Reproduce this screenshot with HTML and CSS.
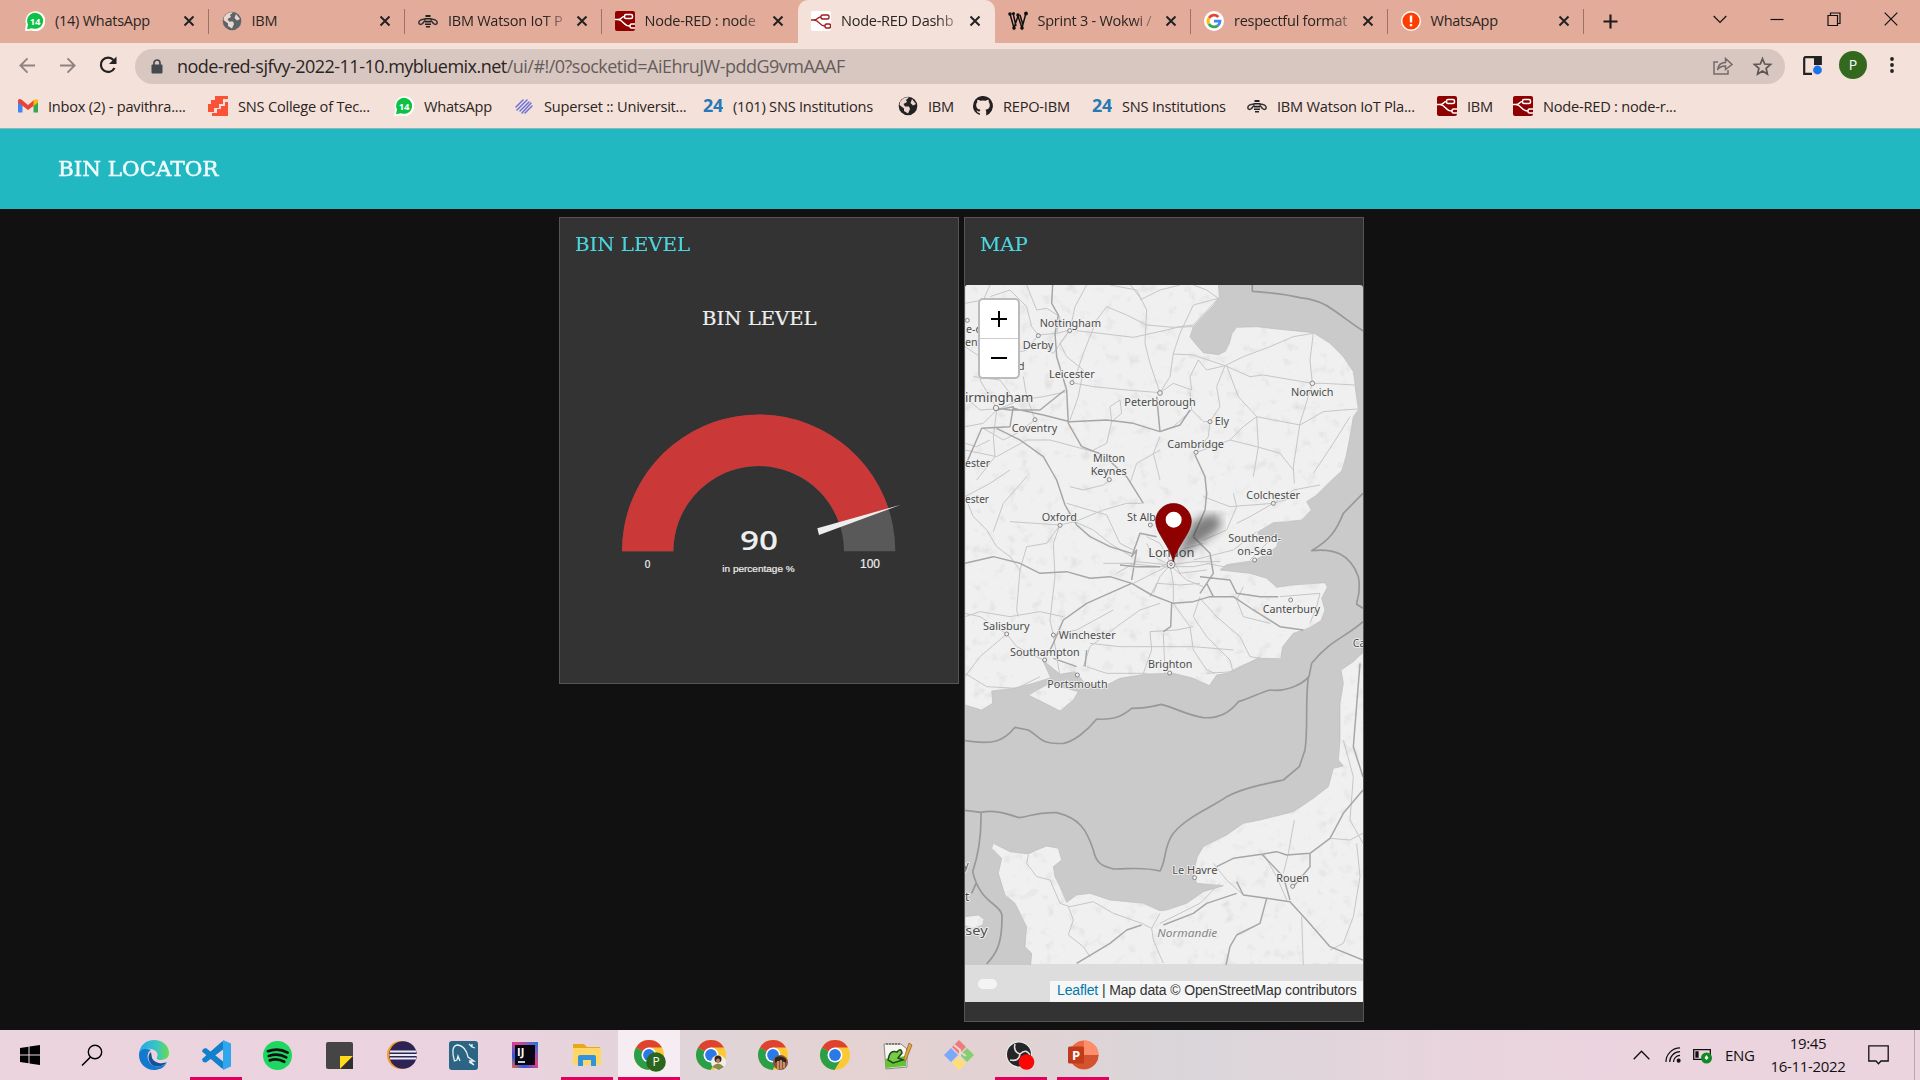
FILE: index.html
```html
<!DOCTYPE html>
<html lang="en">
<head>
<meta charset="utf-8">
<title>Node-RED Dashboard</title>
<link rel="stylesheet" href="styles.css">
</head>
<body>
<svg class="defs" width="0" height="0">
  <symbol id="wa" viewBox="0 0 20 20"><path d="M0 20 1 13A9.900 9.900 0 1 1 7 19.400Z" fill="#fff"/><path d="M2 18.200 3 13.500A8 8 0 1 1 7 17.200Z" fill="#0cc143"/><text x="10" y="13.600" font-size="9.500" font-weight="700" text-anchor="middle" fill="#fff">14</text></symbol>
  <symbol id="globe" viewBox="0 0 20 20"><circle cx="10" cy="10" r="9.300" fill="currentColor"/><path d="M11 1.500 8 4 9 6 5.500 8 7 10.500 11 10.500 12 13 10 17.500 6 15 6 12.500 1.500 9A8 8 0 0 1 11 1.500ZM14 3 12.500 7 15 9.500 18 8Z" fill="#ecd5cc"/></symbol>
  <symbol id="bee" viewBox="0 0 20 20"><g fill="none" stroke="#333" stroke-width="1.500"><path d="M7.500 8.500C4 7.500 .8 9.500 .8 11.500S3 14 4.500 12.500 6 10 7.500 9.500M12.500 8.500C16 7.500 19.200 9.500 19.200 11.500S17 14 15.500 12.500 14 10 12.500 9.500"/></g><path d="M7.500 4h5v2h-5ZM6.500 7h7v1.600h-7ZM7 9.800h6v1.600H7ZM7 12.500h6v1.500H7ZM8 15h4v1.500H8Z" fill="#222"/></symbol>
  <symbol id="nr" viewBox="0 0 20 20"><rect width="20" height="20" rx="2" fill="#8f0000"/><g fill="none" stroke="#fff" stroke-width="1.500"><rect x="9.500" y="3.500" width="8" height="4" rx="1.500"/><path d="M0 8.500h3C7 8.500 6 5.500 9.500 5.500M3 8.500C9 9 8 15 15 15"/><path d="M20 13H16.500Q15 13 15 15T16.500 17H20"/></g></symbol>
  <symbol id="nrw" viewBox="0 0 20 20"><rect width="20" height="20" rx="2" fill="#fff"/><g fill="none" stroke="#a01c1c" stroke-width="1.400"><rect x="10" y="4" width="8" height="4" rx="1.500"/><path d="M0 9h3C7 9 6 6 10 6M3 9C9 9.500 8 15 14 15"/><rect x="14" y="13" width="5.500" height="4" rx="1.500"/></g></symbol>
  <symbol id="wok" viewBox="0 0 20 20"><g fill="none" stroke="#111" stroke-width="1.500"><path d="M2 3 6 17 10 5 14 17 18 2M5 2 8 15M12 4 15 14"/></g><g fill="#111"><circle cx="2" cy="3" r="1.800"/><circle cx="5.500" cy="2.500" r="1.500"/><circle cx="10" cy="4" r="1.800"/><circle cx="18" cy="2.500" r="1.900"/><circle cx="6" cy="17" r="1.800"/><circle cx="14" cy="17" r="1.800"/></g></symbol>
  <symbol id="goog" viewBox="0 0 20 20"><circle cx="10" cy="10" r="10" fill="#fff"/><g fill="none" stroke-width="2.800"><path d="M5 7A6 6 0 0 1 14.300 5.900" stroke="#ea4335"/><path d="M4.800 13A6 6 0 0 1 5 7" stroke="#fbbc05"/><path d="M4.900 13A6 6 0 0 0 13.800 14.600" stroke="#34a853"/><path d="M10 10.200H16A6 6 0 0 1 13.800 14.600" stroke="#4285f4"/></g></symbol>
  <symbol id="alert" viewBox="0 0 20 20"><circle cx="10" cy="10" r="10" fill="#fff"/><circle cx="10" cy="10" r="8.600" fill="#ff3d00"/><path d="M8.800 4.500h2.400v7H8.800ZM8.800 13h2.400v2.300H8.800Z" fill="#fff"/></symbol>
  <symbol id="x" viewBox="0 0 12 12"><path d="M1.500 1.500 10.500 10.500M10.500 1.500 1.500 10.500" stroke="#222" stroke-width="2" fill="none"/></symbol>
  <symbol id="n24" viewBox="0 0 20 20"><text x="10" y="16" font-size="17.500" font-weight="700" text-anchor="middle" textLength="20" lengthAdjust="spacingAndGlyphs" fill="#2778b5">24</text></symbol>
  <symbol id="chrome" viewBox="0 0 30 30"><circle cx="15" cy="15" r="15" fill="#fcc934"/><path d="M15 15 2 7.500A15 15 0 0 1 28 7.500H15Z" fill="#df4231"/><path d="M2 7.500A15 15 0 0 0 14.500 30L21.500 18.500 15 15Z" fill="#2a9e48"/><circle cx="15" cy="15" r="7.500" fill="#fff"/><circle cx="15" cy="15" r="5.900" fill="#2b79e8"/></symbol>
</svg>

<header class="browser">
  <nav class="tabs">
    <div class="tab"><svg class="fav"><use href="#wa"/></svg><span>(14) WhatsApp</span><svg class="x"><use href="#x"/></svg></div>
    <div class="tab"><svg class="fav grey"><use href="#globe"/></svg><span>IBM</span><svg class="x"><use href="#x"/></svg></div>
    <div class="tab"><svg class="fav"><use href="#bee"/></svg><span class="fade">IBM Watson IoT P</span><svg class="x"><use href="#x"/></svg></div>
    <div class="tab plain"><svg class="fav"><use href="#nr"/></svg><span class="fade">Node-RED : node</span><svg class="x"><use href="#x"/></svg></div>
    <div class="tab active"><svg class="fav"><use href="#nrw"/></svg><span class="fade">Node-RED Dashb</span><svg class="x"><use href="#x"/></svg></div>
    <div class="tab"><svg class="fav"><use href="#wok"/></svg><span class="fade">Sprint 3 - Wokwi /</span><svg class="x"><use href="#x"/></svg></div>
    <div class="tab"><svg class="fav"><use href="#goog"/></svg><span class="fade">respectful format</span><svg class="x"><use href="#x"/></svg></div>
    <div class="tab"><svg class="fav"><use href="#alert"/></svg><span>WhatsApp</span><svg class="x"><use href="#x"/></svg></div>
    <svg class="plus" viewBox="0 0 16 16"><path d="M8 .5V15.500M.5 8H15.500" stroke="#1d1d1d" stroke-width="2.300"/></svg>
    <div class="winctl">
      <svg viewBox="0 0 14 14"><path d="M.7 4 7 10.500 13.300 4"/></svg>
      <svg viewBox="0 0 14 14"><path d="M.5 7.500H13.500"/></svg>
      <svg viewBox="0 0 14 14"><path d="M1 3.500H10.500V13.500H1ZM3.500 3V1H13V11.500H11"/></svg>
      <svg viewBox="0 0 14 14"><path d="M.7 .7 13.300 13.300M13.300 .7 .7 13.300"/></svg>
    </div>
  </nav>
  <div class="toolbar">
    <svg class="nav" viewBox="0 0 18 18"><path d="M17 9H2M9 1.500 1.500 9 9 16.500" stroke="#908381"/></svg>
    <svg class="nav" viewBox="0 0 18 18"><path d="M1 9H16M9 1.500 16.500 9 9 16.500" stroke="#908381"/></svg>
    <svg class="nav reload" viewBox="0 0 18 18"><path d="M15.500 12A7.200 7.200 0 1 1 14.500 4" stroke="#222" stroke-width="2.200"/><path d="M17.500 .5V8H10Z" fill="#222" stroke="none"/></svg>
    <div class="omnibox">
      <svg class="lock" viewBox="0 0 12 15"><path d="M3 6V4a3 3 0 0 1 6 0V6" fill="none" stroke="#44494e" stroke-width="1.700"/><rect x=".5" y="5.500" width="11" height="9" rx="1" fill="#44494e"/></svg>
      <p class="url"><b>node-red-sjfvy-2022-11-10.mybluemix.net</b>/ui/#!/0?socketid=AiEhruJW-pddG9vmAAAF</p>
      <svg class="share" viewBox="0 0 20 18"><path d="M5 5H1V17H15V13M4.500 13C5 8 8 5.500 12.500 5.500V1.500L19 7.500 12.500 12.500V9C9 9 6 10 4.500 13Z"/></svg>
      <svg class="star" viewBox="0 0 20 20"><path d="M10 1.800 12.300 7.400 18.500 7.900 13.800 11.900 15.200 18 10 14.800 4.800 18 6.200 11.900 1.500 7.900 7.700 7.400Z"/></svg>
    </div>
    <svg class="side" viewBox="0 0 19 19"><path d="M1.200 1.200H17.800V9M9 17.800H1.200V1.200" fill="none" stroke="#222" stroke-width="2.200"/><path d="M11 1H18V9H11Z" fill="#222"/><circle cx="14.500" cy="14" r="4.400" fill="#1a73e8"/></svg>
    <span class="avatar">P</span>
    <svg class="dots" viewBox="0 0 4 16"><circle cx="2" cy="2" r="1.900"/><circle cx="2" cy="8" r="1.900"/><circle cx="2" cy="14" r="1.900"/></svg>
  </div>
  <nav class="bookmarks">
    <a><svg class="fav gm" viewBox="0 0 20 20"><path d="M0 4.500V16.500H4.500V8Z" fill="#4285f4"/><path d="M15.500 8V16.500H20V4.500Z" fill="#34a853"/><path d="M0 4.500Q1 2 4 4L10 9 16 4V9.500L10 14 4.500 9.800 0 6.500Z" fill="#ea4335"/><path d="M15.500 4.500Q19 2 20 4.500V6.500L15.500 10Z" fill="#fbbc04"/></svg>Inbox (2) - pavithra....</a>
    <a><svg class="fav" viewBox="0 0 20 20"><path d="M7 0H20V3H15V8H11V12H6V16H0V8H3V4H7Z" fill="#fa5236"/><path d="M20 6V20H4V17H9V13H13V10H17V6Z" fill="#fa5236"/></svg>SNS College of Tec...</a>
    <a><svg class="fav"><use href="#wa"/></svg>WhatsApp</a>
    <a><svg class="fav" viewBox="0 0 20 20"><path d="M2 11 9 4M3 14 13 4M6 15 15 6M8 17 17 7M11 17 18 10" stroke="#6c71d5" stroke-width="1.500" stroke-linecap="round"/></svg>Superset :: Universit...</a>
    <a><svg class="fav"><use href="#n24"/></svg>(101) SNS Institutions</a>
    <a><svg class="fav dark"><use href="#globe"/></svg>IBM</a>
    <a><svg class="fav" viewBox="0 0 20 20"><path d="M6.800 19C2.500 17.500 0 14 0 10A10 10 0 1 1 13.200 19.400V16C13.200 14.800 13 14.200 12.500 13.700 15 13.400 16.800 12.300 16.800 9 16.800 7.800 16.400 7 15.700 6.200 15.900 5.500 15.900 4.600 15.500 3.700 14.500 3.700 13.700 4.200 12.700 4.800A9 9 0 0 0 7.300 4.800C6.300 4.200 5.500 3.700 4.500 3.700 4.100 4.600 4.100 5.500 4.300 6.200 3.600 7 3.200 7.800 3.200 9 3.200 12.300 5 13.400 7.500 13.700 7.100 14.100 6.900 14.600 6.800 15.200 5.500 15.700 4.500 15.300 3.500 14 4 16 5 17.200 6.800 17Z" fill="#24201f"/></svg>REPO-IBM</a>
    <a><svg class="fav"><use href="#n24"/></svg>SNS Institutions</a>
    <a><svg class="fav"><use href="#bee"/></svg>IBM Watson IoT Pla...</a>
    <a><svg class="fav"><use href="#nr"/></svg>IBM</a>
    <a><svg class="fav"><use href="#nr"/></svg>Node-RED : node-r...</a>
  </nav>
</header>

<div class="titlebar"><h1>BIN LOCATOR</h1></div>

<main class="board">
  <section class="card">
    <h2>BIN LEVEL</h2>
    <svg class="gauge" viewBox="31 225 1194 1194">
      <text class="caps" x="457" y="346" font-size="53" textLength="344" lengthAdjust="spacingAndGlyphs">BIN LEVEL</text>
      <path d="M217 1024A410 410 0 0 1 1037 1024H883A256 256 0 0 0 371 1024Z" fill="#595959"/>
      <path d="M217 1024A410 410 0 0 1 1017 897L870.500 945A256 256 0 0 0 371 1024Z" fill="#ca3838"/>
      <path d="M803 955 1054 884 808 975Z" fill="#eee"/>
      <text class="ninety" x="571" y="1019" textLength="114" lengthAdjust="spacingAndGlyphs">90</text>
      <g class="small"><text x="285" y="1074" font-size="30">0</text><text x="518" y="1086" font-size="29" textLength="217" lengthAdjust="spacingAndGlyphs">in percentage %</text><text x="931" y="1074" font-size="39" textLength="60" lengthAdjust="spacingAndGlyphs">100</text></g>
    </svg>
  </section>
  <section class="card mapcard">
    <h2>MAP</h2>
    <div class="mapbox">
    <svg class="map" viewBox="965 285 398 717">
      <defs>
        <filter id="terrain" x="0" y="0" width="100%" height="100%"><feTurbulence type="fractalNoise" baseFrequency=".028" numOctaves="4" seed="8"/><feColorMatrix values="0 0 0 0 .7 0 0 0 0 .7 0 0 0 0 .7 2.200 0 0 0 -1.280"/><feComposite in2="SourceAlpha" operator="in" result="n"/><feMerge><feMergeNode in="SourceGraphic"/><feMergeNode in="n"/></feMerge></filter>
        <filter id="soft"><feGaussianBlur stdDeviation="14"/></filter>
      </defs>
      <rect x="965" y="285" width="398" height="680" fill="#cacaca"/>
      <g transform="translate(960 210) scale(.33333)">
        <path class="land" d="M15 220H775L778 262 762 285 730 318 700 350 690 380 705 400 730 428 775 434 796 424 808 400 816 370 830 352 890 350 960 358 1060 368 1110 400 1150 440 1180 485 1188 540 1197 597 1180 620 1170 680 1158 740 1145 783 1110 815 1070 855 1040 875 1054 900 1025 930 980 935 940 938 895 965 893 972 957 982 950 1010 925 1030 880 1052 800 1064 780 1080 870 1090 920 1105 950 1132 1000 1125 1095 1118 1102 1132 1085 1165 1095 1200 1083 1232 1045 1255 1000 1270 968 1310 962 1346 900 1345 850 1365 800 1390 770 1395 748 1427 700 1405 640 1390 560 1392 480 1405 430 1430 375 1420 345 1385 300 1393 248 1350 272 1403 220 1420 160 1435 95 1443 98 1480 65 1500 15 1485Z"/>
        <path class="land" d="M205 1455 268 1420 355 1445 340 1470 300 1503 255 1480ZM1212 1325 1180 1355 1143 1380 1150 1420 1140 1480 1140 1590 1135 1650 1150 1668 1120 1675 1105 1730 1060 1765 1000 1805 900 1830 850 1840 800 1875 730 1910 712 1940 700 1990 710 2020 790 2027 730 2045 680 2080 620 2100 600 2102 550 2080 450 2070 390 2050 350 2055 320 2077 300 2030 285 2000 280 1970 305 1950 295 1915 260 1908 230 1920 205 1932 150 1925 100 1900 95 1915 125 1945 115 1990 135 2055 165 2080 185 2120 200 2150 195 2210 215 2230 212 2265H1212ZM15 2120 55 2115 72 2128 68 2145 40 2155 15 2148Z"/>
        <g class="minor">
          <path d="M15 280 70 270 90 225M90 260 150 240 200 290 215 350 235 375 290 370 330 360 420 370 520 382 620 360 660 350 700 345 775 265M235 375 200 420 130 440 60 510M240 400 280 430 330 360 345 290 380 225M330 360 300 400 320 440 370 480 355 560 330 630M440 290 410 330 370 430 350 490 335 518M335 518 400 530 500 540 600 548M440 290 500 315 560 345 640 352 700 350M450 225 530 240 560 300 555 400 570 460 600 548M512 225 545 270M540 270 600 240 660 225M700 225 740 240 775 265M775 265 700 285 660 370 640 430 630 500 600 548M640 432 700 435 795 467 740 480 715 450 690 500 695 540 640 520 600 548M690 545 695 600 640 650 605 662M695 600 730 635 750 635M750 635 745 680 708 728M795 467 770 530 780 590 750 635M795 467 850 440 930 410 1000 380 1060 370M795 467 870 500 910 495 1057 520M1057 520 1050 450 1060 370M1057 520 1090 520 1185 525 1195 597M1057 520 1020 640 1000 770 1003 820M800 467 835 560 890 620 1020 645 1090 605 1150 600 1195 597M890 620 850 650 810 690 708 728M890 620 895 710 880 800M810 690 890 710 960 730 1000 780M1170 620 1120 700 1060 790M600 680 580 730 600 810M600 720 530 760 510 820M455 635 450 590 480 570 485 610 455 635 440 700 400 720M15 560 60 600 130 595M15 650 70 640 110 600 180 570 250 560 320 545M70 655 130 690 170 670 225 630M225 630 200 560 190 500M15 700 50 710 90 690M15 720 110 740 200 690 270 690 400 725M110 600 100 680 105 740 50 810M200 225 230 300 260 295 300 320 290 370M150 550 120 510 40 500M15 410 60 440 60 510 110 595"/>
          <path d="M15 860 90 820 150 780M15 860 40 920 80 960 110 1010 150 1040 180 1080 170 1200 175 1220M100 965 130 880 200 800M150 935 300 945 345 935 430 900 500 880 545 880M300 945 280 1000 285 1100 270 1230 280 1275M300 945 260 1000 200 1010 180 1080M330 830 370 840 430 825 450 810M345 935 400 960 450 1000 515 1040M320 880 440 915 480 1000 520 1020M500 1060 600 1070 630 1060M640 1050 660 1090 740 1080M630 1065 530 1055 470 1090M630 1065 540 1110 520 1120M630 1065 600 1100 580 1150M630 1065 680 1110 730 1130M630 1065 640 1120 640 1180M630 1065 700 1055 780 1055M540 1070 600 1070 700 1070 750 1060M570 1160 590 1120 660 1125 720 1120M560 980 600 1000 630 1055 660 1020 730 1000M520 1060 470 1060 430 1060M560 1000 580 1040 620 1060M700 1050 820 1020 890 965M740 1060 790 1070 870 1060M730 990 800 960 830 890 820 850M730 860 810 890 940 880 1000 840 1080 825M830 940 870 920 940 880 1010 860M600 1180 540 1200 470 1250 390 1310 370 1370M720 1160 700 1220 740 1280 810 1350 820 1390M720 1165 770 1220 840 1280 870 1340 930 1350M700 1250 650 1260 570 1265 575 1320 550 1390M610 1270 615 1390M390 1300 480 1310 700 1310 820 1320M640 1180 690 1250 700 1320 740 1380 765 1390M280 1275 350 1260 460 1200M15 1220 60 1205 150 1220 240 1205 310 1220M140 1272 60 1220 15 1210M140 1272 170 1310 250 1350M140 1272 60 1340 15 1400M15 1390 80 1430 170 1435 240 1400M280 1275 300 1400M850 1130 830 1170 850 1220 930 1240M960 1160 1080 1150 1070 1190 1050 1240M380 1370 440 1390 560 1390M740 1390 820 1385 900 1340M940 960 920 1000 870 1050"/>
          <path d="M205 1935 200 1960 230 2000 270 2010 300 2080 330 2090 400 2075 460 2110 545 2140 575 2155 600 2110M325 2090 340 2130 325 2175 370 2210 390 2240M575 2155 580 2190 610 2260M1003 1830 985 1930 970 1990M1150 1590 1180 1700 1170 1830 1209 1900M1110 1885 1170 1890 1209 1870M910 1932 950 2000 980 2070M760 1960 800 2010 850 2055M1190 1900 1200 2000 1180 2120 1150 2200 1110 2220M1025 2120 1030 2265M600 2140 720 2080 780 2020"/>
        </g>
        <g class="major">
          <path d="M278 225 275 280 295 315 285 370 290 440 320 540 325 640 365 710 430 735 500 800 550 880M315 540 240 600 150 600 110 595M160 595 250 615 330 635 440 630 520 640 600 665 660 645 690 600M110 600 160 590 150 650 65 655 15 770M110 655 180 690 250 740 290 810 315 885 350 945 390 980 450 1010 515 1030M590 560 600 665M705 735 735 800 740 850 735 900 700 980M15 1060 100 1040 180 1060 240 1090 320 1085 390 1105 450 1100 515 1120 575 1155 640 1180 700 1175 750 1160 820 1160 880 1200 960 1250 1030 1260M515 1120 380 1180 310 1230 280 1300 265 1330M515 1110 530 1020 515 1040 540 970 590 980M700 980 750 1030 760 1090 720 1150M480 1065 530 1070 600 1070M720 1100 810 1110 830 1150 900 1160 955 1160M720 1150 740 1120 760 1160M635 1180 632 1250 610 1265M280 1345 350 1370M375 1370 380 1320"/>
          <path d="M770 1970 820 1945 910 1932 950 1925 980 1935 1050 1930 1110 1885 1150 1810 1209 1740M1209 1700 1180 1610 1200 1360M830 2015 850 2055 920 2065 990 2075 1040 2130 1110 2210 1209 2250M350 2260 450 2200 500 2160 545 2145M610 2145 700 2110 740 2080 830 2050M920 2065 900 2140 830 2175 810 2210 798 2265M1050 1930 1050 1970 1000 2030M905 1932 970 2000 990 2070"/>
        </g>
        <g fill="none" stroke="#989898" stroke-width="5" stroke-linejoin="round">
          <path d="M877 225V244C950 250 970 250 1020 263 1070 268 1100 285 1120 300 1150 320 1180 345 1212 364M1209 850 1150 910C1130 960 1110 990 1055 1022 1120 1015 1170 1030 1195 1100 1205 1150 1187 1180 1190 1183L1209 1195M1209 1235C1160 1280 1110 1290 1055 1360L1047 1400C1020 1430 970 1445 930 1440 900 1448 870 1465 835 1475 800 1520 760 1525 730 1523 680 1515 650 1495 603 1483 560 1495 540 1495 515 1495 480 1525 450 1530 410 1527 380 1565 340 1595 310 1600 240 1605 240 1580 205 1560L165 1552C130 1595 100 1605 15 1592M1045 1400C1035 1480 1045 1550 1035 1620L1018 1670 970 1710C900 1725 850 1735 800 1760 760 1790 680 1820 640 1870 610 1910 620 1950 600 1983 550 1970 510 1977 460 1977 440 1970 410 1970 400 1920 380 1860 360 1825 290 1808 230 1805 210 1820 177 1823 130 1807 100 1800 63 1807L15 1801M63 1807C65 1900 50 1950 38 1985 60 2080 120 2080 126 2115 127 2200 110 2230 80 2262M48 2020 35 2050"/>
        </g>
        <g class="dots-map"><circle cx="329" cy="362" r="6"/><circle cx="235" cy="377" r="6"/><circle cx="336" cy="518" r="6"/><circle cx="600" cy="549" r="7"/><circle cx="108" cy="594" r="8"/><circle cx="225" cy="629" r="6"/><circle cx="1057" cy="520" r="7"/><circle cx="750" cy="635" r="6"/><circle cx="708" cy="727" r="6"/><circle cx="448" cy="809" r="6"/><circle cx="22" cy="331" r="6"/><circle cx="300" cy="946" r="6"/><circle cx="571" cy="945" r="6"/><circle cx="940" cy="880" r="6"/><circle cx="884" cy="1050" r="6"/><circle cx="992" cy="1170" r="6"/><circle cx="140" cy="1272" r="6"/><circle cx="280" cy="1275" r="6"/><circle cx="254" cy="1350" r="6"/><circle cx="352" cy="1395" r="6"/><circle cx="629" cy="1389" r="6"/><circle cx="704" cy="2003" r="6"/><circle cx="998" cy="2029" r="6"/><circle cx="633" cy="1063" r="12"/><circle cx="633" cy="1063" r="4" fill="#555"/></g>
        <g class="labels">
          <text x="239" y="350" textLength="184" lengthAdjust="spacingAndGlyphs">Nottingham</text><text x="188" y="416" textLength="92" lengthAdjust="spacingAndGlyphs">Derby</text><text x="267" y="504" textLength="137" lengthAdjust="spacingAndGlyphs">Leicester</text><text x="493" y="587" textLength="214" lengthAdjust="spacingAndGlyphs">Peterborough</text><text x="993" y="557" textLength="127" lengthAdjust="spacingAndGlyphs">Norwich</text><text x="764" y="646" textLength="43" lengthAdjust="spacingAndGlyphs">Ely</text><text x="15" y="577" font-size="36" textLength="205" lengthAdjust="spacingAndGlyphs">irmingham</text><text x="155" y="667" textLength="137" lengthAdjust="spacingAndGlyphs">Coventry</text><text x="622" y="714" textLength="170" lengthAdjust="spacingAndGlyphs">Cambridge</text><text x="399" y="755" textLength="96" lengthAdjust="spacingAndGlyphs">Milton</text><text x="392" y="794" textLength="108" lengthAdjust="spacingAndGlyphs">Keynes</text><text x="15" y="770" textLength="75" lengthAdjust="spacingAndGlyphs">ester</text><text x="18" y="368">e-o</text><text x="15" y="407">ent</text><text x="174" y="481">d</text>
          <text x="15" y="878" textLength="72" lengthAdjust="spacingAndGlyphs">ester</text><text x="245" y="933" textLength="106" lengthAdjust="spacingAndGlyphs">Oxford</text><text x="501" y="933" textLength="141" lengthAdjust="spacingAndGlyphs">St Albans</text><text x="859" y="866" textLength="161" lengthAdjust="spacingAndGlyphs">Colchester</text><text x="805" y="996" textLength="158" lengthAdjust="spacingAndGlyphs">Southend-</text><text x="832" y="1035" textLength="105" lengthAdjust="spacingAndGlyphs">on-Sea</text><text x="565" y="1040" font-size="37" textLength="138" lengthAdjust="spacingAndGlyphs">London</text><text x="908" y="1210" textLength="172" lengthAdjust="spacingAndGlyphs">Canterbury</text><text x="69" y="1259" textLength="140" lengthAdjust="spacingAndGlyphs">Salisbury</text><text x="296" y="1286" textLength="171" lengthAdjust="spacingAndGlyphs">Winchester</text><text x="150" y="1337" textLength="209" lengthAdjust="spacingAndGlyphs">Southampton</text><text x="564" y="1375" textLength="133" lengthAdjust="spacingAndGlyphs">Brighton</text><text x="262" y="1433" textLength="181" lengthAdjust="spacingAndGlyphs">Portsmouth</text><text x="1178" y="1312">Ca</text>
          <text x="637" y="1991" textLength="135" lengthAdjust="spacingAndGlyphs">Le Havre</text><text x="949" y="2015" textLength="98" lengthAdjust="spacingAndGlyphs">Rouen</text><text x="592" y="2180" textLength="180" lengthAdjust="spacingAndGlyphs" font-style="italic" class="region">Normandie</text><text x="15" y="2074" font-size="36">t</text><text x="16" y="2174" font-size="36" textLength="67" lengthAdjust="spacingAndGlyphs">sey</text><text x="10" y="1978">y</text>
        </g>
        <path d="M640 1050C670 1010 675 960 710 930 750 900 795 915 780 950 760 980 700 1010 640 1050Z" fill="#333" opacity=".6" filter="url(#soft)"/>
        <path d="M640 1056C632 1010 587 970 587 934A53.500 53.500 0 0 1 694 934C694 970 648 1010 640 1056Z" fill="#8f0000" stroke="#690000" stroke-width="2"/><circle cx="641" cy="929" r="24" fill="#fff"/>
      </g>
      <rect x="965" y="965" width="398" height="37" fill="#ddd"/>
      <rect x="978" y="979" width="19" height="10" rx="5" fill="#f4f4f4"/>
    </svg>
    <div class="zoom"><span><svg viewBox="0 0 16 16"><path d="M8 0V16M0 8H16"/></svg></span><span><svg viewBox="0 0 16 16"><path d="M0 8H16"/></svg></span></div>
    <div class="credit"><i>Leaflet</i> | Map data © OpenStreetMap contributors</div>
    </div>
  </section>
</main>

<footer class="taskbar">
  <div class="app"><svg width="20" height="20" viewBox="0 0 20 20"><path d="M0 3 8.500 1.800V9.500H0ZM9.500 1.600 20 0V9.500H9.500ZM0 10.500H8.500V18.200L0 17ZM9.500 10.500H20V20L9.500 18.400Z"/></svg></div>
  <div class="app"><svg width="22" height="22" viewBox="0 0 22 22"><circle cx="14" cy="8" r="6.700" fill="none" stroke="#000" stroke-width="1.400"/><path d="M9.500 13 1 21.500" stroke="#000" stroke-width="1.600"/></svg></div>
  <div class="app"><svg width="30" height="30" viewBox="0 0 30 30"><defs><linearGradient id="eg"><stop stop-color="#22a8e8"/><stop offset=".6" stop-color="#3bc5c0"/><stop offset="1" stop-color="#66dc4e"/></linearGradient></defs><path d="M0 14C1 5 7 0 15 0 24 0 30 6 30 13 30 18 26 20 21 20 18 20 17 18 18.500 16 19.500 11 13 8 8 9 3 10 1 13 0 14Z" fill="url(#eg)"/><path d="M0 15C0 9 7 8 12 10 8 12 7 19 12 24 17 28 24 27 27.500 23 25 28 20 30 15 30 6 30 0 23 0 15Z" fill="#1379ce"/><path d="M12 12C8 15 9 22 14 25.500 19 28 25 26 28 22 24 24 16 24 13 18Z" fill="#0f529c"/></svg></div>
  <div class="app run"><svg width="30" height="30" viewBox="0 0 30 30"><path d="M2 9 5 8 24 23V29L21 28.500 1 11.500ZM1 19 21 1.500 24 1V8L5 22.500 2 22Z" fill="#1280cb"/><path d="M22 0 30 3.500V26.500L22 30Z" fill="#30a6ef"/></svg></div>
  <div class="app"><svg width="29" height="29" viewBox="0 0 30 30"><circle cx="15" cy="15" r="15" fill="#1ed760"/><path d="M5 10.500Q16 6.500 25.500 12M6 15.500Q16 12 24 17M7 20Q15 17.500 22 21.500" fill="none" stroke="#111" stroke-width="2.800" stroke-linecap="round"/></svg></div>
  <div class="app"><svg width="27" height="27" viewBox="0 0 27 27"><path d="M2 0H25Q27 0 27 2V14L14 27H2Q0 27 0 25V2Q0 0 2 0Z" fill="#454545"/><path d="M14 14H27L14 27Z" fill="#ffd91a"/><path d="M27 14V27H14Z" fill="#2f2f2f"/></svg></div>
  <div class="app"><svg width="30" height="28" viewBox="0 0 30 28"><circle cx="14" cy="14" r="14" fill="#f59a29"/><circle cx="16" cy="14" r="13.800" fill="#2d2454"/><path d="M3 10.500H29M2.500 14H30M3 17.500H29" stroke="#e9e9f4" stroke-width="2"/></svg></div>
  <div class="app"><svg width="29" height="29" viewBox="0 0 29 29"><rect width="29" height="29" rx="3" fill="#2b6583"/><path d="M8 19 5.500 20C3 12 3 5 8 4 14 4 18 10 19 16L25 20 21 20 25 24 20 21M8 19 9 15 11 20M20 3 23 6 26 7M23 6V3" fill="none" stroke="#e8f1f5" stroke-width="1.300"/></svg></div>
  <div class="app"><svg width="26" height="26" viewBox="0 0 26 26"><defs><linearGradient id="ij" x1="0" y1="1" x2="1" y2="0"><stop stop-color="#f6653b"/><stop offset=".25" stop-color="#275be0"/><stop offset=".55" stop-color="#ee3f87"/><stop offset="1" stop-color="#117ce7"/></linearGradient></defs><rect width="26" height="26" fill="url(#ij)"/><rect x="3" y="3" width="20" height="20" fill="#090611"/><text x="5" y="13.500" font-size="11" font-weight="700" fill="#fff">IJ</text><path d="M6 20H13" stroke="#fff" stroke-width="1.600"/></svg></div>
  <div class="app run"><svg width="28" height="24" viewBox="0 0 28 24"><path d="M0 1H11L14 4H27V22H0Z" fill="#e9a815"/><path d="M0 5H28V22H0Z" fill="#ffd766"/><path d="M5 23V14Q5 12 7 12H21Q23 12 23 14V23H18V17H10V23Z" fill="#3093dc"/></svg></div>
  <div class="app run on"><svg width="30" height="30" viewBox="0 0 30 30"><use href="#chrome" width="30" height="30"/><circle cx="22" cy="22" r="9.800" fill="#2b661e"/><text x="22" y="26" text-anchor="middle" font-size="12" fill="#fff">P</text></svg></div>
  <div class="app"><svg width="30" height="30" viewBox="0 0 30 30"><use href="#chrome"/><circle cx="22.500" cy="22.500" r="7.500" fill="#f2eee5"/><circle cx="22" cy="19" r="3.500" fill="#39251f"/><path d="M16 27Q22 20 28 27L23 30Z" fill="#8d8a48"/><circle cx="22" cy="20.500" r="2" fill="#b8815c"/></svg></div>
  <div class="app"><svg width="30" height="30" viewBox="0 0 30 30"><use href="#chrome"/><circle cx="22.500" cy="22.500" r="7.500" fill="#8b5436"/><path d="M17 18Q22 14 28 19V23Q22 18 17 23Z" fill="#29241f"/><path d="M20 21V29M23 20V29M26 22V28" stroke="#dda080" stroke-width="1.500"/></svg></div>
  <div class="app"><svg width="30" height="30"><use href="#chrome"/></svg></div>
  <div class="app"><svg width="29" height="29" viewBox="0 0 29 29"><path d="M1 3H18L24 8V26L3 28Z" fill="#f6f6ef" stroke="#888"/><path d="M2 18 23 15V25L3 27Z" fill="#62c434"/><path d="M6 15Q8 9 14 11 18 6 19 12L15 17 20 19 10 22 5 19Z" fill="#79c94a" stroke="#23451b" stroke-width="1.500"/><path d="M26 2 29 4 23 19 21 20V17Z" fill="#e9a33a" stroke="#704924" stroke-width=".6"/><path d="M3 3H18" stroke="#444" stroke-dasharray="2 1"/></svg></div>
  <div class="app"><svg width="30" height="30" viewBox="0 0 30 30"><path d="M15 0 22 7 15 14 8 7Z" fill="#ee7b7b"/><path d="M7 8 14 15 7 22 0 15Z" fill="#7da8f7"/><path d="M23 8 30 15 23 22 16 15Z" fill="#86cf70"/><path d="M15 16 22 23 15 30 8 23Z" fill="#ffdf72"/><path d="M10 5 16 10V22M16 12 22 16" fill="none" stroke="#ead7d7" stroke-width="2"/></svg></div>
  <div class="app run"><svg width="29" height="29" viewBox="0 0 29 29"><circle cx="13" cy="13.500" r="13" fill="#eee"/><circle cx="13" cy="13.500" r="12" fill="#252427"/><path d="M9 3Q7 11 14 13 20 7 24 14M14 13Q13 21 4 19" fill="none" stroke="#ddd" stroke-width="1.600"/><circle cx="20.500" cy="21" r="7.800" fill="#fb0505"/></svg></div>
  <div class="app run"><svg width="30" height="30" viewBox="0 0 30 30"><circle cx="16" cy="15" r="14.500" fill="#ed6c47"/><path d="M16 .5A14.500 14.500 0 0 1 30.500 15H16Z" fill="#ff8f6b"/><path d="M16 15H30.500A14.500 14.500 0 0 1 3 21Z" fill="#d35230"/><rect y="6.500" width="16" height="17" rx="1.500" fill="#c13b1b"/><text x="8" y="19.500" font-size="13" font-weight="700" text-anchor="middle" fill="#fff">P</text></svg></div>
  <div class="tray">
    <svg class="up" viewBox="0 0 17 10"><path d="M.7 9.300 8.500 1.200 16.300 9.300"/></svg>
    <svg class="wifi" viewBox="0 0 17 17"><path d="M1 16A15 15 0 0 1 16 1M5 16A11 11 0 0 1 16 5M9 16A7 7 0 0 1 16 9"/><circle cx="14.500" cy="14.500" r="1.500" fill="#111"/></svg>
    <svg class="batt" viewBox="0 0 20 17"><path d="M.7 2.700H17.300V12.300H.7Z"/><path d="M3 5V10H5V5Z" fill="#111"/><circle cx="13.500" cy="11" r="5.500" fill="#128a23" stroke="none"/><path d="M13.500 8 15.500 11 13.500 13 11.500 11Z" fill="#fff" stroke="none"/></svg>
    <span class="eng">ENG</span>
    <div class="clock"><span>19:45</span><span>16-11-2022</span></div>
    <svg class="note" viewBox="0 0 21 20"><path d="M.8 .8H20.200V16H13L10.500 18.700 8 16H.8Z"/></svg>
    <span class="peek"></span>
  </div>
</footer>
</body>
</html>
```
FILE: styles.css
```css
* { box-sizing: border-box; }
body { margin: 0; width: 1920px; height: 1080px; overflow: hidden; display: flex; flex-direction: column; background: #111; font-family: "Open Sans", "Noto Sans", sans-serif; color: #2a2422; }
.defs { display: none; }
h1, h2, p { margin: 0; }
svg { flex: none; overflow: visible; }

.browser { height: 129px; flex: none; background: #f4e1da; border-bottom: 1px solid #88b9b7; }
.tabs { height: 43px; background: #e3ac9a; display: flex; align-items: center; padding-left: 12px; }
.tab { width: 196.500px; height: 43px; padding: 0 14px 1px 13px; display: flex; align-items: center; position: relative; font-size: 14.500px; letter-spacing: -.25px; }
.tab::after { content: ""; position: absolute; right: 0; top: 9px; width: 1px; height: 25px; background: #9b7264; }
.tab.active { background: #f4e1da; border-radius: 10px 10px 0 0; }
.tab.plain::after, .tab.active::after { display: none; }
.tab span { flex: 1; margin: -2px 8px 0 10px; white-space: nowrap; }
.tab .fade { mask-image: linear-gradient(90deg, #000 80%, rgba(0, 0, 0, .2)); }
.fav { width: 20px; height: 20px; }
.grey { color: #5d6468; }
.dark { color: #222; }
.x { width: 12px; height: 12px; }
.plus { width: 15px; height: 15px; margin-left: 19px; }
.winctl { display: flex; gap: 43px; margin-left: auto; padding: 0 22px 6px 0; }
.winctl svg { width: 14px; height: 14px; fill: none; stroke: #111; stroke-width: 1.200; }

.toolbar { height: 44px; display: flex; align-items: center; padding-left: 19px; }
.nav { width: 17px; height: 17px; margin-right: 23px; fill: none; stroke-width: 2; }
.reload { width: 18px; height: 18px; margin-right: 18px; }
.omnibox { width: 1650px; height: 35px; margin-top: 2px; border-radius: 18px; background: #d8c7c1; display: flex; align-items: center; padding: 0 13px 0 16px; }
.lock { width: 12px; height: 15px; margin-right: 14px; }
.url { font-size: 18px; letter-spacing: -.520px; white-space: nowrap; color: #665c59; flex: 1; padding-bottom: 1px; }
.url b { font-weight: 400; color: #2a2422; }
.share { width: 20px; height: 18px; margin-right: 20px; fill: none; stroke: #746a69; stroke-width: 1.500; }
.star { width: 19px; height: 19px; fill: none; stroke: #5e5655; stroke-width: 1.800; }
.side { width: 19px; height: 19px; margin-left: 18px; }
.avatar { width: 28px; height: 28px; border-radius: 50%; background: #33691e; color: #fff; font-size: 14px; line-height: 28px; text-align: center; margin-left: 17px; }
.dots { width: 4px; height: 16px; margin-left: 23px; fill: #222; }

.bookmarks { height: 37px; padding-left: 18px; display: grid; grid-template-columns: 190px 186px 120px 189px 195px 75px 119px 155px 190px 76px 180px; align-items: center; font-size: 14.600px; letter-spacing: -.22px; }
.bookmarks a { display: flex; gap: 10px; align-items: center; white-space: nowrap; }

.titlebar { height: 80px; flex: none; background: #22b8c2; display: flex; align-items: center; padding-left: 58px; }
h1, h2, .caps { font-family: "DejaVu Serif", serif; font-weight: 400; }
h1 { font-size: 19.500px; color: #f0fbfc; transform: scaleX(1.1); transform-origin: left; padding-top: 1px; -webkit-text-stroke: .5px #f0fbfc; }

.board { height: 821px; flex: none; display: flex; align-items: flex-start; gap: 5px; padding: 8px 0 0 559px; }
.card { width: 400px; height: 467px; border: 1px solid #555; background: #333; display: flex; flex-direction: column; }
.mapcard { height: 805px; }
h2 { height: 67px; width: 340px; padding: 15px 0 0; margin-left: 15px; font-size: 17.800px; line-height: 24px; color: #4ad5df; transform: scaleX(1.11); transform-origin: left; -webkit-text-stroke: .2px #4ad5df; }
.caps { fill: #eee; stroke: #eee; stroke-width: .6; }
.gauge { width: 398px; height: 398px; }
.ninety { font: 600 80px "Open Sans", sans-serif; fill: #eee; }
.small { font-family: "Liberation Sans", sans-serif; fill: #eee; stroke: #eee; stroke-width: .6; }
.mapbox { position: relative; width: 398px; height: 717px; overflow: hidden; border-radius: 3px 3px 0 0; }
.map { width: 398px; height: 717px; display: block; overflow: hidden; }
.land { fill: #f0f0f0; stroke: #bbb; stroke-width: 2; filter: url(#terrain); }
.minor { fill: none; stroke: #c6c6c6; stroke-width: 3; stroke-linejoin: round; }
.major { fill: none; stroke: #a6a6a6; stroke-width: 4.400; stroke-linejoin: round; }
.dots-map circle { fill: #eee; stroke: #777; stroke-width: 2.500; }
.labels { font: 32px "Noto Sans", sans-serif; fill: #4c4c4c; stroke: #f2f2f2; stroke-width: 5; paint-order: stroke; stroke-linejoin: round; }
.region { fill: #858585; }
.zoom { position: absolute; left: 13px; top: 13px; width: 42px; border: 2px solid #bbb; border-radius: 5px; background: #fff; }
.zoom span { display: flex; align-items: center; justify-content: center; height: 38px; }
.zoom span:first-child { height: 39px; border-bottom: 1px solid #ccc; }
.zoom svg { width: 16px; height: 16px; stroke: #000; stroke-width: 2; }
.credit { position: absolute; right: 0; bottom: 0; width: 313px; height: 21px; padding-left: 7px; background: #f6f6f6; font: 14px/19px "Liberation Sans", sans-serif; letter-spacing: -.13px; color: #333; white-space: nowrap; }
.credit i { font-style: normal; color: #0078a8; }

.taskbar { height: 50px; flex: none; display: flex; background: linear-gradient(90deg, #ecd4df 0, #ead3de 520px, #dfd4d8 700px, #e5d2d3 860px, #e2d2d3 1000px, #d9d6da 1180px, #e8d4dd 1450px, #ecd4df 1650px); }
.app { width: 61.950px; flex: none; display: flex; align-items: center; justify-content: center; position: relative; }
.app:first-child { margin-left: -1px; }
.app.run::after { content: ""; position: absolute; bottom: 0; left: 5px; right: 5px; height: 3px; background: #e1005d; }
.app.on { background: #f5edf1; }
.app.on::after { left: 0; right: 0; }
.tray { margin-left: auto; width: 287px; display: flex; align-items: center; font-size: 15px; letter-spacing: -.35px; color: #111; }
.tray svg { fill: none; stroke: #111; stroke-width: 1.300; }
.up { width: 17px; height: 10px; }
.wifi { width: 16px; height: 16px; margin-left: 15px; }
.batt { width: 20px; height: 17px; margin-left: 12px; }
.eng { width: 30px; margin-left: 12px; }
.clock { width: 78px; margin-left: 14px; display: flex; flex-direction: column; align-items: center; line-height: 23px; white-space: nowrap; }
.note { width: 21px; height: 20px; margin-left: 21px; }
.peek { width: 1px; height: 50px; margin-left: auto; margin-right: 5px; background: #b9a7af; }
```
